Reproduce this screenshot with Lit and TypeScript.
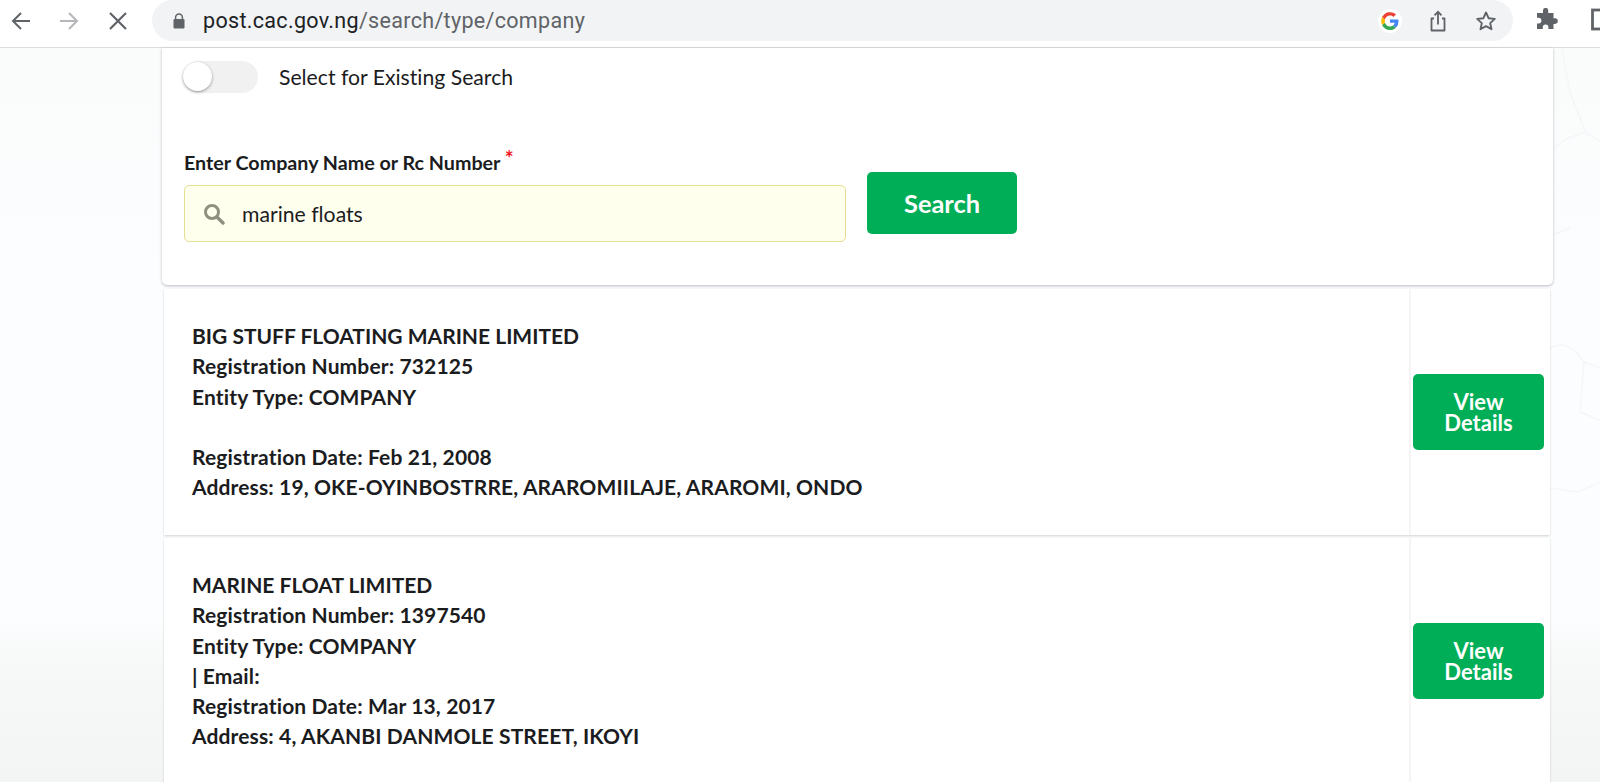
import { LitElement, html, css, svg } from 'lit';
import { customElement } from 'lit/decorators.js';

const results = [
  {
    name: 'BIG STUFF FLOATING MARINE LIMITED',
    number: '732125',
    email: false,
    date: 'Feb 21, 2008',
    address: '19, OKE-OYINBOSTRRE, ARAROMIILAJE, ARAROMI, ONDO',
  },
  {
    name: 'MARINE FLOAT LIMITED',
    number: '1397540',
    email: true,
    date: 'Mar 13, 2017',
    address: '4, AKANBI DANMOLE STREET, IKOYI',
  },
];

const icon = (w: number, h: number, body: unknown) =>
  html`<svg width=${w} height=${h} viewBox="0 0 ${w} ${h}" fill="none">${body}</svg>`;

@customElement('app-root')
export class AppRoot extends LitElement {
  static styles = css`
    :host {
      display: block;
      height: 782px;
      overflow: hidden;
      font-family: Lato, 'Liberation Sans', sans-serif;
      font-variant-ligatures: no-common-ligatures;
      color: #1b1c1e;
      background: #fff;
    }
    .toolbar {
      display: flex;
      align-items: flex-start;
      height: 47px;
      border-bottom: 1px solid #dcdde0;
      box-shadow: 0 1px 1px rgba(0, 0, 0, 0.05);
      position: relative;
    }
    .nav {
      display: flex;
      width: 152px;
      padding: 9px 0 0 9px;
      gap: 24px;
      box-sizing: border-box;
      flex: none;
    }
    .nav svg {
      display: block;
    }
    .omnibox {
      flex: none;
      width: 1361px;
      height: 41px;
      background: #f1f3f4;
      border-radius: 21px;
      display: flex;
      align-items: center;
      padding: 0 15px 0 21px;
      box-sizing: border-box;
    }
    .url {
      margin-left: 18px;
      font-family: Roboto, sans-serif;
      font-size: 21.5px;
      letter-spacing: 0.32px;
      color: #5f6368;
      flex: 1;
    }
    .url b {
      font-weight: 400;
      color: #202124;
    }
    .om-icons {
      display: flex;
      align-items: center;
      gap: 24px;
    }
    .ext {
      display: flex;
      align-items: center;
      gap: 33px;
      padding: 8px 0 0 21px;
    }
    .page {
      height: 734px;
      padding-left: 162px;
      position: relative;
      background: linear-gradient(180deg, #fafbfb 0%, #fcfdfe 30%, #fcfdfe 78%, #f7f8f8 84%, #f3f4f4 100%);
    }
    .backdrop {
      position: absolute;
      right: 0;
      top: 0;
    }
    .card,
    .row {
      position: relative;
    }
    .card {
      width: 1391px;
      height: 237px;
      box-sizing: border-box;
      background: #fff;
      border-radius: 0 0 5px 5px;
      box-shadow: 0 1px 3px rgba(60, 64, 80, 0.35);
      padding: 13px 21px 0 22px;
    }
    .switch-row {
      display: flex;
      align-items: center;
      gap: 21px;
      margin-left: -1px;
    }
    .switch {
      width: 75px;
      height: 32px;
      border-radius: 16px;
      background: #f1f1f2;
      position: relative;
    }
    .knob {
      position: absolute;
      left: 0;
      top: 1px;
      width: 29px;
      height: 29px;
      border-radius: 50%;
      background: #fff;
      box-shadow: 0 1px 3px rgba(0, 0, 0, 0.4);
    }
    .switch-label {
      font-size: 21.2px;
    }
    .form {
      display: flex;
      align-items: flex-start;
      gap: 21px;
      margin-top: 53px;
    }
    .label {
      font-size: 19.7px;
      font-weight: 700;
      line-height: 24px;
      margin-bottom: 10px;
      margin-top: 5px;
      display: block;
    }
    .label sup {
      color: #f0141e;
      font-size: 21px;
      line-height: 0;
      position: relative;
      top: 4px;
    }
    .input {
      width: 662px;
      height: 57px;
      box-sizing: border-box;
      background: #ffffee;
      border: 1px solid #e6df93;
      border-radius: 5px;
      display: flex;
      align-items: center;
      gap: 17px;
      padding-left: 18px;
      font-size: 21.2px;
    }
    .search {
      width: 150px;
      height: 62px;
      margin-top: 26px;
      background: #00ae57;
      color: #fff;
      border-radius: 5px;
      font-size: 25.4px;
      font-weight: 700;
      display: flex;
      align-items: center;
      justify-content: center;
    }
    .row {
      width: 1386px;
      margin-left: 2px;
      margin-top: 4px;
      height: 246px;
      background: #fff;
      display: flex;
      box-shadow: 0 1px 2px rgba(60, 64, 80, 0.22);
    }
    .row + .row {
      margin-top: 3px;
    }
    .info {
      width: 1247px;
      flex: none;
      box-sizing: border-box;
      padding: 32px 0 0 28px;
      font-size: 21px;
      font-weight: 700;
      line-height: 30.3px;
      letter-spacing: 0.13px;
      border-right: 2px solid #f5f5f6;
    }
    .name {
      letter-spacing: 0;
    }
    .action {
      flex: 1;
      display: flex;
      align-items: center;
      padding-left: 2px;
    }
    .view {
      width: 131px;
      height: 76px;
      background: #00ae57;
      color: #fff;
      border-radius: 5px;
      font-size: 22px;
      font-weight: 700;
      line-height: 21px;
      text-align: center;
      display: flex;
      align-items: center;
      justify-content: center;
    }
  `;

  render() {
    return html`
      <div class="toolbar">
        <div class="nav">
          ${icon(24, 24, svg`<path d="M21 12H4M12 4l-8 8 8 8" stroke="#5f6368" stroke-width="2"/>`)}
          ${icon(24, 24, svg`<path d="M3 12h17M12 4l8 8-8 8" stroke="#b4b6b9" stroke-width="2"/>`)}
          ${icon(24, 24, svg`<path d="M5 4l16 16M21 4L5 20" stroke="#5f6368" stroke-width="2.2"/>`)}
        </div>
        <div class="omnibox">
          ${icon(12, 16, svg`<path d="M2.6 6V4.4a3.4 3.4 0 0 1 6.8 0V6" stroke="#5f6368" stroke-width="1.5"/><rect x="0.5" y="6" width="11" height="9.5" rx="1.3" fill="#5f6368"/>`)}
          <span class="url"><b>post.cac.gov.ng</b>/search/type/company</span>
          <div class="om-icons">
            ${icon(24, 24, svg`<circle cx="12" cy="12" r="12" fill="#fff"/>
              <path d="M20.5 12.2c0-.6-.1-1.2-.2-1.7H12v3.3h4.8a4 4 0 0 1-1.8 2.7l2.8 2.2a8.6 8.6 0 0 0 2.7-6.5z" fill="#4285f4"/>
              <path d="M12 21c2.4 0 4.400-.8 5.800-2.300L15 16.500c-.8.500-1.800.9-3 .9-2.300 0-4.300-1.600-5-3.700l-2.900 2.200A9 9 0 0 0 12 21z" fill="#34a853"/>
              <path d="M7 13.700a5.300 5.300 0 0 1 0-3.400L4.100 8.100a9 9 0 0 0 0 7.800z" fill="#fbbc05"/>
              <path d="M12 6.600c1.300 0 2.500.5 3.400 1.300L18 5.400A9 9 0 0 0 4.100 8.100L7 10.300c.7-2.100 2.700-3.700 5-3.700z" fill="#ea4335"/>`)}
            ${icon(24, 24, svg`<path d="M8 9.500H5.500v12h13v-12H16" stroke="#5f6368" stroke-width="1.800" stroke-linejoin="round"/><path d="M12 15.500V3M8.500 6.300L12 2.800l3.500 3.500" stroke="#5f6368" stroke-width="1.800"/>`)}
            ${icon(24, 24, svg`<path d="M12 3.500l2.600 5.700 6.200.7-4.600 4.200 1.300 6.100L12 17.100l-5.500 3.100 1.300-6.100-4.600-4.200 6.200-.7z" stroke="#5f6368" stroke-width="1.900" stroke-linejoin="round"/>`)}
          </div>
        </div>
        <div class="ext">
          ${icon(24, 24, svg`<path d="M9 2.500a2.600 2.600 0 0 1 5.200 0V5h5.300v5.300h1.500a2.800 2.800 0 0 1 0 5.600h-1.500V21h-5.100v-1.700a2.800 2.800 0 0 0-5.600 0V21H3v-5.500h1.500a2.900 2.900 0 0 0 0-5.800H3V5h6z" fill="#5f6368"/>`)}
          ${icon(30, 24, svg`<rect x="1.500" y="2" width="30" height="19" stroke="#5f6368" stroke-width="2.800"/>`)}
        </div>
      </div>
      <div class="page">
        <svg class="backdrop" width="60" height="734" viewBox="0 0 60 734" fill="none">
          <path d="M22 0l8 45 16 40 14 8M0 110l28-20 18-6M30 180l-30 12M10 300c14-8 26 2 34 14l16 6M44 314l-4 50 20 8M8 440l30 4 22-10" stroke="#f5f6f7" stroke-width="1.500"/>
        </svg>
        <div class="card">
          <div class="switch-row">
            <div class="switch"><div class="knob"></div></div>
            <span class="switch-label">Select for Existing Search</span>
          </div>
          <div class="form">
            <div>
              <span class="label">Enter Company Name or Rc Number <sup>*</sup></span>
              <div class="input">
                ${icon(22, 22, svg`<circle cx="9" cy="9" r="6.500" stroke="#8f9080" stroke-width="3"/><path d="M14 14l6 6" stroke="#8f9080" stroke-width="3.400" stroke-linecap="round"/>`)}
                <span>marine floats</span>
              </div>
            </div>
            <div class="search">Search</div>
          </div>
        </div>
        ${results.map(
          r => html`
            <div class="row">
              <div class="info">
                <span class="name">${r.name}</span><br />
                Registration Number: ${r.number}<br />
                Entity Type: COMPANY<br />
                ${r.email ? '| Email:' : ''}<br />
                Registration Date: ${r.date}<br />
                Address: ${r.address}
              </div>
              <div class="action"><div class="view">View<br />Details</div></div>
            </div>
          `
        )}
      </div>
    `;
  }
}
